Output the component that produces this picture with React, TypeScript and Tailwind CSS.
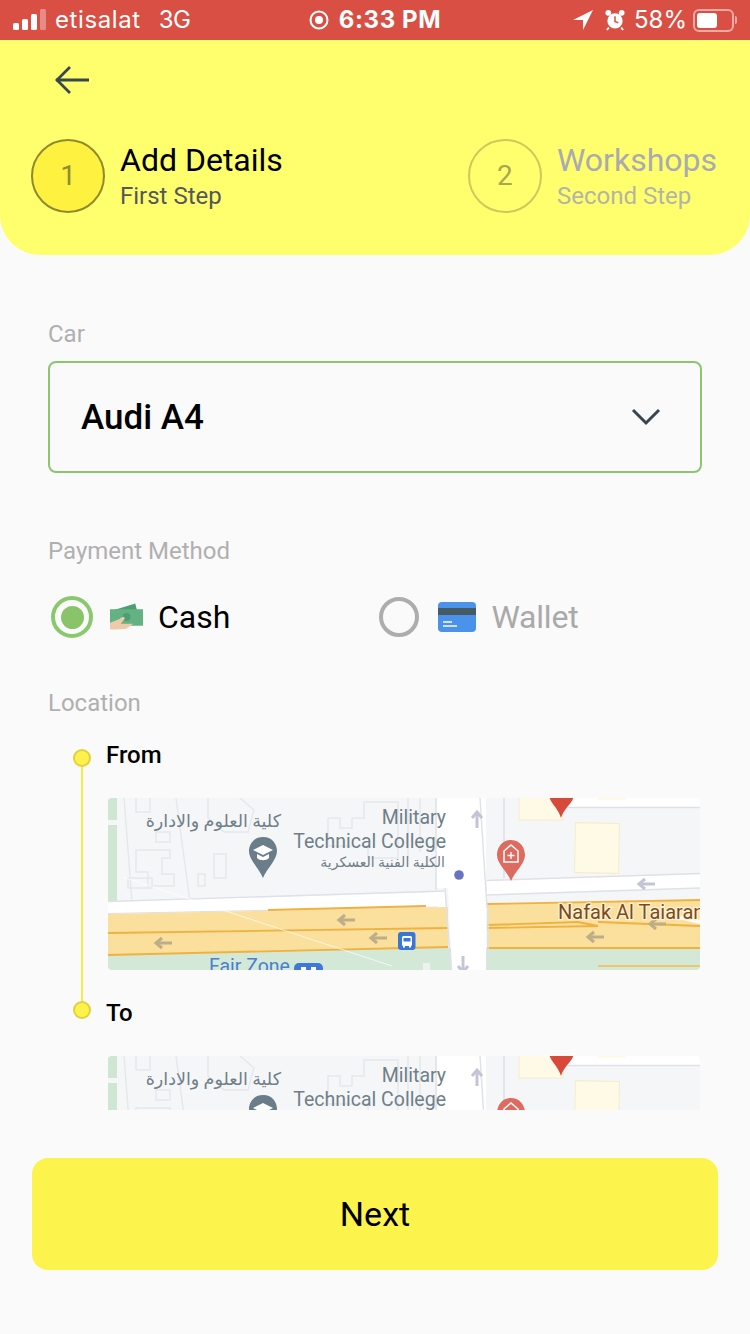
import React from "react";

function Arrow({ x, y, dir = "left", color = "#bcae86" }: { x: number; y: number; dir?: "left" | "up" | "down"; color?: string }) {
  const rot = dir === "left" ? 0 : dir === "up" ? 90 : -90;
  return (
    <g transform={`translate(${x} ${y}) rotate(${rot})`} fill="none" stroke={color} strokeWidth={3}>
      <path d="M-8 0H8" />
      <path d="M-2 -5L-8 0L-2 5" />
    </g>
  );
}

function MapView() {
  const road = "#dfe1e8";
  return (
    <svg viewBox="0 0 592 172" width={592} height={172} className="block" style={{ fontFamily: "Roboto, 'DejaVu Sans', sans-serif" }}>
      <rect width={592} height={172} fill="#f5f6f8" />
      {/* greens */}
      <rect x={0} y={0} width={9} height={22} fill="#cfe6d2" />
      <rect x={0} y={27} width={9} height={76} fill="#cfe6d2" />
      <rect x={0} y={150} width={592} height={22} fill="#d4e8d7" />
      {/* building outlines */}
      <g fill="none" stroke="#e6e7eb" strokeWidth={1.4}>
        <path d="M28 0V14H42V0" />
        <path d="M16 0L24 104" />
        <path d="M68 0L82 104" />
        <path d="M100 0L100 20L116 34H140L146 12L132 0" />
        <path d="M48 34H62V44H48Z" />
        <path d="M28 52H62V60H54V76H66V88H40V74H28Z" />
        <path d="M106 56H118V80H106Z" />
        <path d="M90 76H97V88H90Z" />
        <path d="M20 80H44V90H20Z" />
        <path d="M220 20H232V30H244V20H256V4H290V60H260V48H220Z" />
        <path d="M300 0V60" />
        <path d="M312 0V54" />
      </g>
      {/* right block */}
      <rect x={411} y={-2} width={44} height={24} fill="#fefae6" stroke="#f5eccb" />
      <rect x={467} y={25} width={44} height={50} fill="#fefae6" stroke="#f5eccb" transform="rotate(1 489 50)" />
      <rect x={450} y={0} width={142} height={9} fill="#ffffff" />
      <path d="M450 9.5H592" stroke={road} strokeWidth={1.4} />
      <rect x={490} y={0} width={28} height={2} fill="#fefae6" />
      <path d="M396 0V80" stroke={road} strokeWidth={1.6} />
      {/* horizontal white roads */}
      <path d="M0 104L338 94V110L0 116Z" fill="#ffffff" />
      <path d="M0 103.5L336 93" stroke={road} strokeWidth={1.4} fill="none" />
      <path d="M0 115.5L330 109" stroke={road} strokeWidth={1.2} fill="none" />
      <path d="M379 83L592 76V90L379 97Z" fill="#ffffff" />
      <path d="M379 82.5L592 75.5" stroke={road} strokeWidth={1.4} fill="none" />
      <path d="M379 97L592 90" stroke={road} strokeWidth={1.4} fill="none" />
      {/* highway */}
      <path d="M0 116L340 109V149L0 157Z" fill="#fbdf9c" />
      <path d="M379 106L592 102V150H379Z" fill="#fbdf9c" />
      <g fill="none" stroke="#efb241" strokeWidth={1.8}>
        <path d="M0 135L340 130" />
        <path d="M0 157L340 149" />
        <path d="M160 112L318 108" />
        <path d="M379 106L592 102" />
        <path d="M379 127L470 124L490 128L379 130" />
        <path d="M490 124L592 128" />
        <path d="M379 150H592" />
        <path d="M490 168H592" stroke="#f1c36a" />
      </g>
      <path d="M566 120L592 126V122L574 118Z" fill="#ffffff" />
      {/* diagonal */}
      <path d="M15 79L284 168" stroke="#ffffff" strokeWidth={1} opacity={0.7} fill="none" />
      {/* vertical white road */}
      <path d="M329 0H378V172H344L340 90H329Z" fill="#ffffff" />
      <g fill="none" stroke={road} strokeWidth={1.4}>
        <path d="M328 0V92" />
        <path d="M372 0L379 110" />
        <path d="M380 110V172" />
        <path d="M337 90L343 172" />
      </g>
      <rect x={315} y={165} width={7} height={7} fill="#eef2ee" />
      {/* arrows */}
      <Arrow x={369} y={22} dir="up" color="#c3c5d6" />
      <Arrow x={539} y={86} color="#c3c5d6" />
      <Arrow x={355} y={166} dir="down" color="#c3c5d6" />
      <Arrow x={239} y={122} />
      <Arrow x={271} y={140} />
      <Arrow x={56} y={145} />
      <Arrow x={488} y={139} />
      <Arrow x={550} y={126} />
      {/* labels */}
      <g fill="#6f7f88">
        <text x={338} y={26} textAnchor="end" fontSize={19.5}>Military</text>
        <text x={338} y={50} textAnchor="end" fontSize={19.5}>Technical College</text>
        <text x={337} y={69} textAnchor="end" fontSize={14}>الكلية الفنية العسكرية</text>
        <text x={173} y={29} textAnchor="end" fontSize={17.5}>كلية العلوم والادارة</text>
      </g>
      <text x={450} y={121} fontSize={20} fill="#7d4a1e" stroke="#fdf3d6" strokeWidth={2.5} style={{ paintOrder: "stroke" }}>Nafak Al Taiaran</text>
      <text x={101} y={175} fontSize={19.5} fill="#4a7fd0">Fair Zone</text>
      <rect x={186} y={165} width={29} height={18} rx={5} fill="#3f78d8" />
      <rect x={193} y={169} width={5} height={4} fill="#ffffff" />
      <rect x={203} y={169} width={5} height={4} fill="#ffffff" />
      {/* graduation pin */}
      <path d="M155 39C145 39 141 47 141 53C141 62 151 70 155 80C159 70 169 62 169 53C169 47 165 39 155 39Z" fill="#6a7d88" />
      <path d="M145 52L155 47L165 52L155 57Z" fill="#fff" />
      <path d="M149 56V60C152 63 158 63 161 60V56L155 59Z" fill="#fff" />
      {/* hospital pin */}
      <path d="M403 42C393 42 389 51 389 57C389 66 399 73 403 83C407 73 417 66 417 57C417 51 413 42 403 42Z" fill="#dd6b60" />
      <path d="M396 53L403 47L410 53V64H396Z" fill="none" stroke="#fff" strokeWidth={1.5} />
      <path d="M403 54V61M399.5 57.5H406.5" stroke="#fff" strokeWidth={1.4} />
      {/* red pin */}
      <path d="M441 -2H466C464 6 456 10 453 20C450 10 443 6 441 -2Z" fill="#d8493a" />
      {/* blue dot */}
      <circle cx={351} cy={77} r={4.8} fill="#6874c2" />
      {/* bus */}
      <rect x={290} y={134} width={17.5} height={18} rx={3} fill="#3a76d6" />
      <rect x={294} y={138} width={10} height={10} rx={1.5} fill="#fff" />
      <rect x={295.5} y={140} width={7} height={3.5} fill="#3a76d6" />
      <rect x={295} y={148} width={2} height={1.5} fill="#fff" />
      <rect x={301} y={148} width={2} height={1.5} fill="#fff" />
    </svg>
  );
}

function Step({ n, title, sub, active }: { n: string; title: string; sub: string; active?: boolean }) {
  return (
    <div className="flex items-center gap-[15px]">
      {active ? (
        <div className="flex h-[74px] w-[74px] items-center justify-center rounded-full border-2 border-[#8e8a2d] bg-[#fff13f] text-[28px] text-[#8f8c33]">{n}</div>
      ) : (
        <div className="flex h-[74px] w-[74px] items-center justify-center rounded-full border-2 border-[#cdca5c] text-[28px] text-[#a8a74f]">{n}</div>
      )}
      <div className="flex flex-col">
        {active ? (
          <span className="text-[32px] leading-[40px] text-black">{title}</span>
        ) : (
          <span className="text-[32px] leading-[40px] text-[#a9aab2]">{title}</span>
        )}
        {active ? (
          <span className="text-[24px] leading-[32px] text-[#55575c]">{sub}</span>
        ) : (
          <span className="text-[24px] leading-[32px] text-[#b3b5a6]">{sub}</span>
        )}
      </div>
    </div>
  );
}

export default function App() {
  return (
    <div className="flex h-[1334px] w-[750px] flex-col overflow-hidden bg-[#fafafa] font-['Roboto',sans-serif]">
      {/* Status bar */}
      <div className="grid h-10 shrink-0 grid-cols-3 items-center bg-[#d94f43] px-[13px] text-[24px] leading-none text-white">
        <div className="flex items-center">
          <svg width={33} height={24} viewBox="0 0 33 24" className="mr-[9px]">
            <rect x={0} y={15} width={6} height={7} rx={1.5} fill="#fff" />
            <rect x={9} y={11} width={6} height={11} rx={1.5} fill="#fff" />
            <rect x={18} y={6} width={6} height={16} rx={1.5} fill="#fff" />
            <rect x={27} y={1} width={6} height={21} rx={1.5} fill="#fff" fillOpacity={0.35} />
          </svg>
          <span className="font-['Inter',sans-serif] text-[24px] tracking-[0.6px]">etisalat</span>
          <span className="ml-[18px] font-['Inter',sans-serif] text-[24px] tracking-[-0.5px]">3G</span>
        </div>
        <div className="flex items-center justify-center gap-[10px]">
          <svg width={20} height={20} viewBox="0 0 20 20">
            <circle cx={10} cy={10} r={8.5} fill="none" stroke="#fff" strokeWidth={2} />
            <circle cx={10} cy={10} r={4} fill="#fff" />
          </svg>
          <span className="whitespace-nowrap font-['Inter',sans-serif] text-[24px] font-bold tracking-[0.6px]">6:33 PM</span>
        </div>
        <div className="flex items-center justify-end">
          <svg width={20} height={20} viewBox="0 0 19 19">
            <path d="M19 0L0 9.5H9.5V19Z" fill="#fff" />
          </svg>
          <svg width={20} height={22} viewBox="0 0 21 22" className="ml-[12px]">
            <circle cx={10.5} cy={12} r={8} fill="#fff" />
            <path d="M10.5 7V12.5L14 14" stroke="#d94f43" strokeWidth={1.6} fill="none" />
            <circle cx={3.5} cy={3.5} r={3} fill="#fff" />
            <circle cx={17.5} cy={3.5} r={3} fill="#fff" />
            <path d="M4 19L2 21.5M17 19L19 21.5" stroke="#fff" strokeWidth={1.8} />
          </svg>
          <span className="ml-[9px] font-['Inter',sans-serif] text-[24px]">58%</span>
          <div className="ml-[6px] flex h-[23px] w-[41px] items-center rounded-[6px] border-2 border-[#ecaaa4] p-[2px]">
            <div className="h-full w-[20px] rounded-[3px] bg-white" />
          </div>
          <div className="ml-[1px] h-[8px] w-[2px] rounded-r-sm bg-[#ecaaa4]" />
        </div>
      </div>

      {/* Header */}
      <div className="h-[215px] shrink-0 rounded-b-[40px] bg-[#ffff6d]">
        <div className="pl-[55px] pt-[26px]">
          <svg width={34} height={28} viewBox="0 0 34 28" className="block" fill="none" stroke="#37474f" strokeWidth={2.8}>
            <path d="M1 14H34" />
            <path d="M15 1L2 14L15 27" />
          </svg>
        </div>
        <div className="mt-[45px] flex items-center justify-between pl-[31px] pr-[33px]">
          <Step n="1" title="Add Details" sub="First Step" active />
          <Step n="2" title="Workshops" sub="Second Step" />
        </div>
      </div>

      {/* Form */}
      <div className="px-[48px] pt-[64px]">
        <div className="text-[24px] leading-[30px] text-[#b0b0b0]">Car</div>
        <div className="mt-[12px] flex h-[112px] items-center justify-between rounded-[8px] border-2 border-[#8cc56f] pl-[31px] pr-[39px]">
          <span className="pt-[3px] text-[35px] font-medium text-black">Audi A4</span>
          <svg width={30} height={18} viewBox="0 0 30 18" fill="none" stroke="#37474f" strokeWidth={3}>
            <path d="M2 2L15 15L28 2" />
          </svg>
        </div>
        <div className="mt-[63px] text-[24px] leading-[30px] text-[#b0b0b0]">Payment Method</div>
        <div className="mt-[29px] flex h-[44px] items-center">
          <div className="ml-[3px] flex h-[42px] w-[42px] items-center justify-center rounded-full border-4 border-[#8ac86e]">
            <div className="h-[23px] w-[23px] rounded-full bg-[#8ac46a]" />
          </div>
          <svg width={33} height={28} viewBox="0 0 34 28" className="ml-[17px]">
            <path d="M0 8L26 0L28 8Z" fill="#4d9e72" />
            <rect x={0} y={6} width={34} height={17} fill="#63b283" />
            <circle cx={17} cy={14} r={4} fill="#4d9e72" />
            <path d="M0 27V20L10 16C13 13 16 14 15 16L11 21H24L17 26L6 27Z" fill="#efc9a9" />
          </svg>
          <span className="ml-[15px] text-[32px] text-black">Cash</span>
          <div className="ml-[149px] h-[40px] w-[40px] rounded-full border-4 border-[#adadad]" />
          <svg width={38} height={30} viewBox="0 0 38 30" className="ml-[19px]">
            <rect width={38} height={30} rx={4} fill="#4a92ea" />
            <rect y={6} width={38} height={7} fill="#455a64" />
            <rect x={5} y={19} width={9} height={2} fill="#cfe2fa" />
            <rect x={5} y={23} width={14} height={2} fill="#cfe2fa" />
          </svg>
          <span className="ml-[15px] text-[32px] tracking-[-0.2px] text-[#a9a9a9]">Wallet</span>
        </div>
        <div className="mt-[49px] text-[24px] leading-[30px] text-[#b0b0b0]">Location</div>
      </div>

      {/* Timeline, clipped like a scrolling list */}
      <div className="mt-[22px] h-[370px] shrink-0 overflow-hidden pl-[73px] pr-[50px]">
        <div className="flex h-[258px]">
          <div className="flex w-[18px] flex-col items-center pt-[9px]">
            <div className="h-[18px] w-[18px] shrink-0 rounded-full border-2 border-[#dfd33c] bg-[#fff14c]" />
            <div className="w-[2px] flex-1 bg-[#fae84c]" />
          </div>
          <div className="ml-[15px] flex-1">
            <div className="text-[24px] font-medium leading-[30px] text-black">From</div>
            <div className="ml-[2px] mt-[28px] h-[172px] overflow-hidden rounded-[4px]">
              <MapView />
            </div>
          </div>
        </div>
        <div className="flex">
          <div className="flex w-[18px] flex-col items-center">
            <div className="h-[3px] w-[2px] shrink-0 bg-[#fae84c]" />
            <div className="h-[18px] w-[18px] shrink-0 rounded-full border-2 border-[#dfd33c] bg-[#fff14c]" />
          </div>
          <div className="ml-[15px] flex-1">
            <div className="text-[24px] font-medium leading-[30px] text-black">To</div>
            <div className="ml-[2px] mt-[28px] h-[172px] overflow-hidden rounded-[4px]">
              <MapView />
            </div>
          </div>
        </div>
      </div>

      {/* Next */}
      <div className="mt-[48px] px-[32px]">
        <button className="flex h-[112px] w-full items-center justify-center rounded-[16px] bg-[#fdf34d] text-[34px] text-black">Next</button>
      </div>
    </div>
  );
}
